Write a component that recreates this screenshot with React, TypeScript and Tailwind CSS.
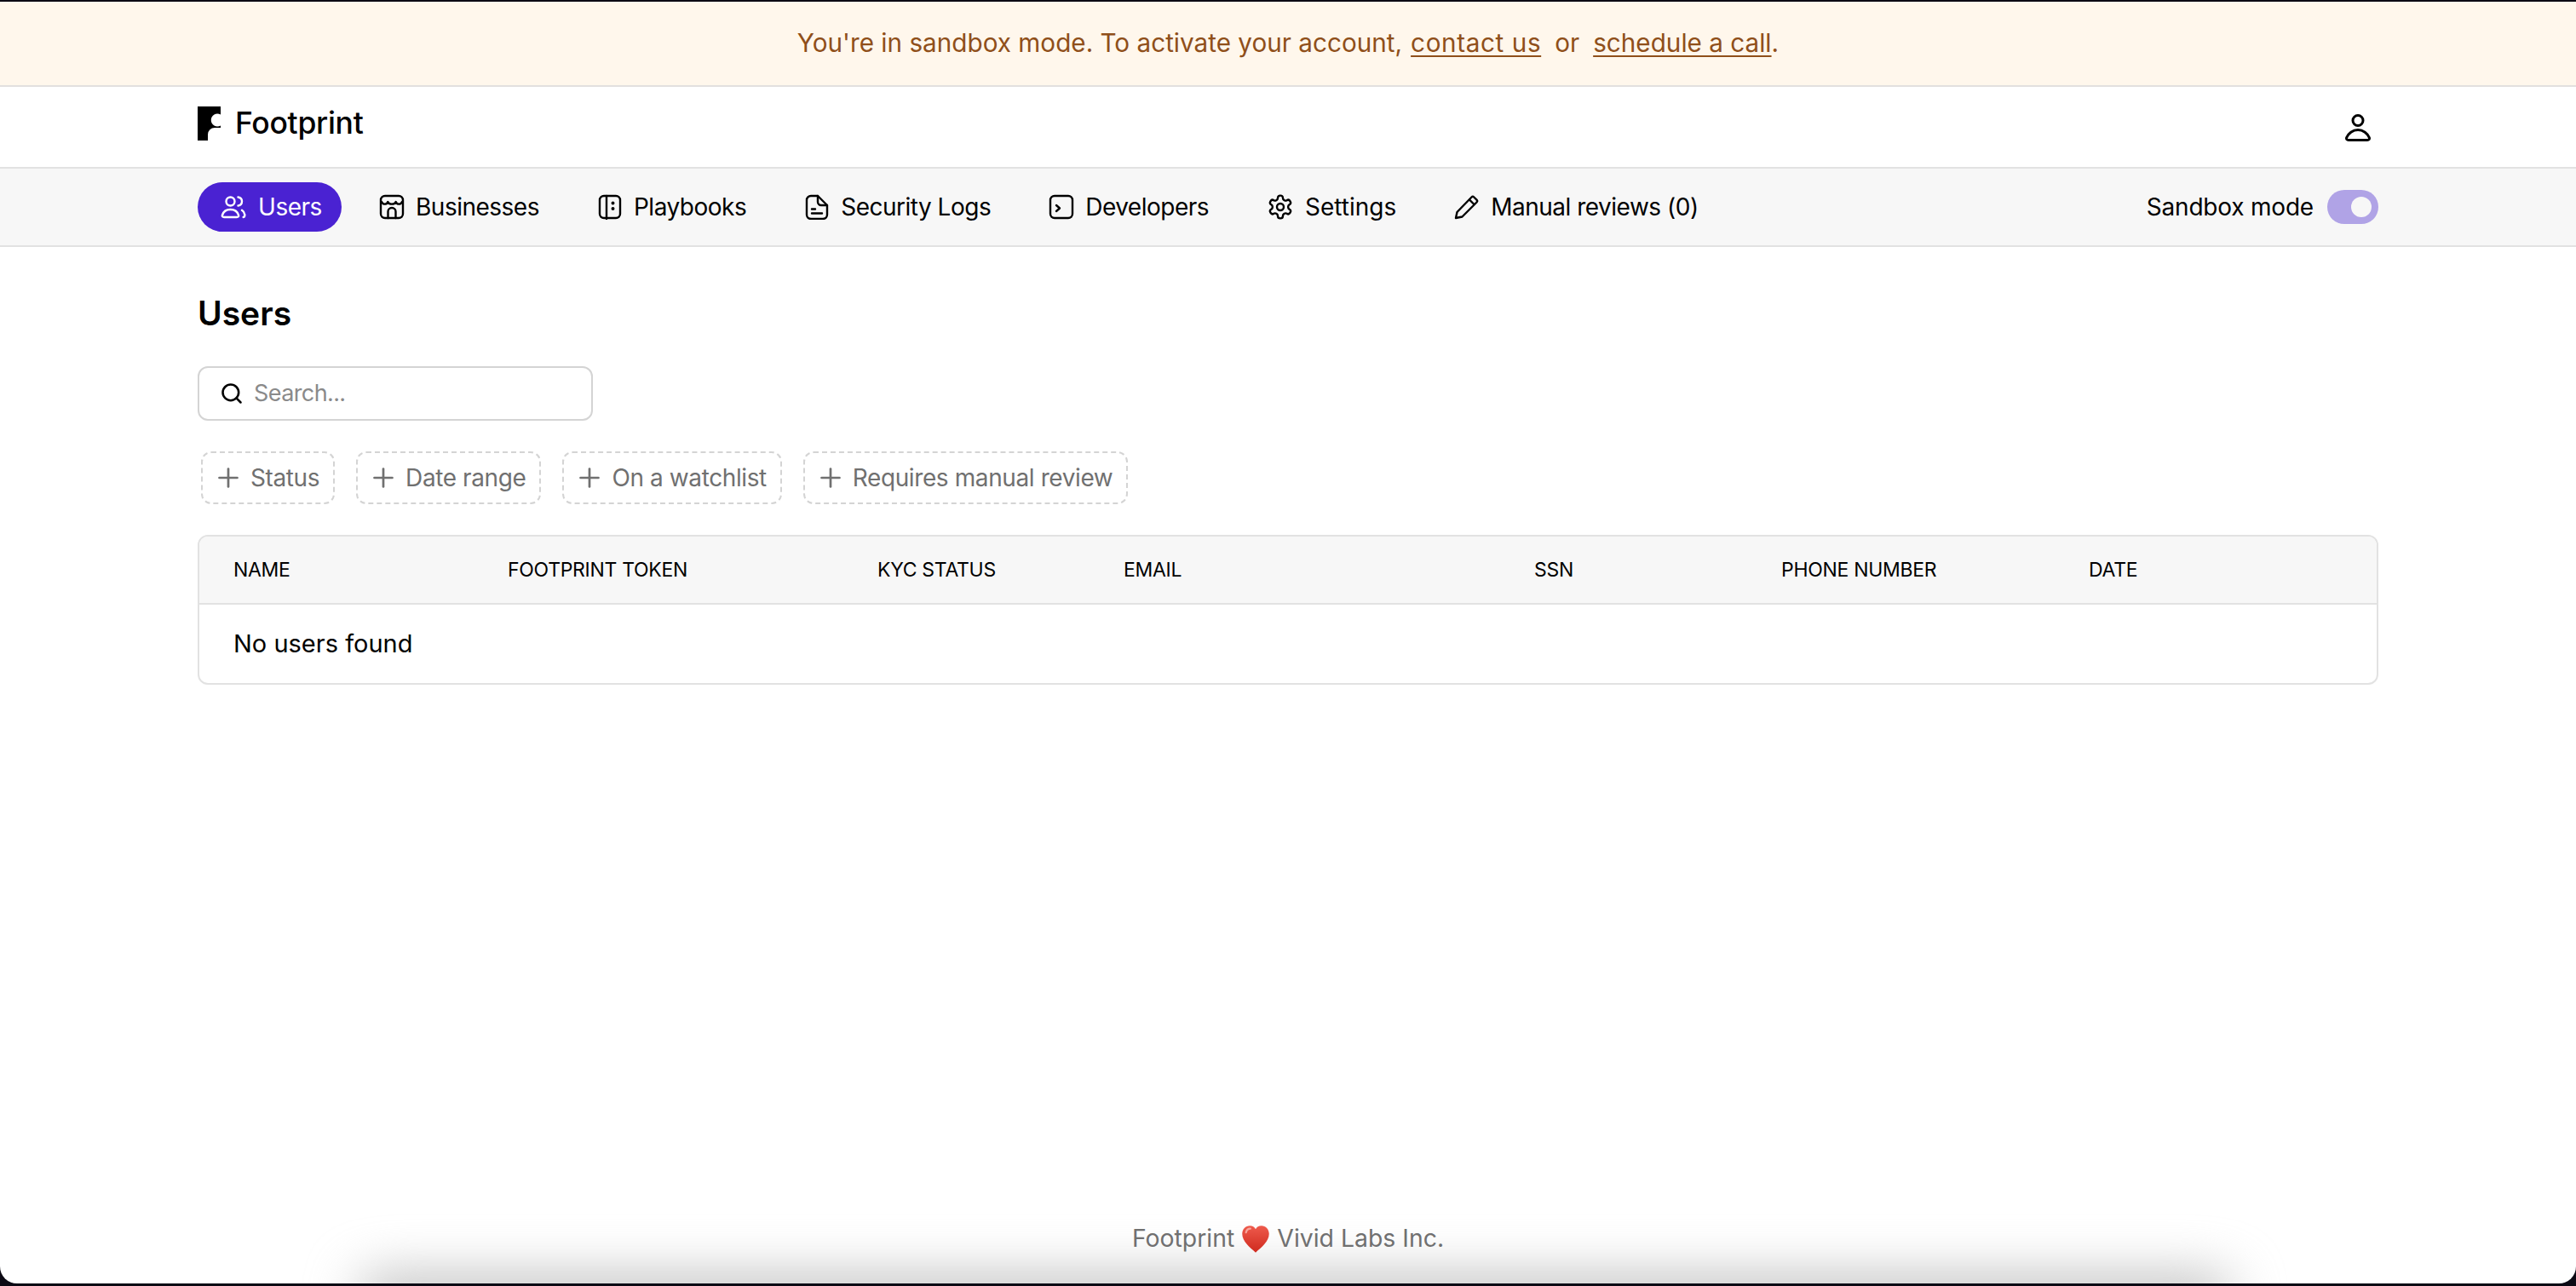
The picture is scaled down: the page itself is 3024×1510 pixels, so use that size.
import React from 'react';
import { Search, Plus } from 'lucide-react';

const font = "font-['Inter','Liberation_Sans',sans-serif]";

function UsersIcon() {
  return (
    <svg width="30" height="30" viewBox="0 0 30 30" fill="none" stroke="currentColor" strokeWidth="2.4" strokeLinecap="round" strokeLinejoin="round">
      <circle cx="11.5" cy="8.5" r="5" />
      <path d="M4 27c-1.700 0-2.500-1-2-2.500C3.300 20.300 7 18 11.500 18s8.200 2.300 9.500 6.500c.5 1.500-.3 2.500-2 2.500H4Z" />
      <path d="M20.500 3.500c2.800.4 4.500 2.500 4.500 5s-1.700 4.600-4.500 5" />
      <path d="M25 18.800c1.700 1.100 2.900 2.900 3.300 5.200.2 1.500-.4 2.800-1.600 3" />
    </svg>
  );
}

function StoreIcon() {
  return (
    <svg width="30" height="30" viewBox="0 0 30 30" fill="none" stroke="currentColor" strokeWidth="2.4" strokeLinecap="round" strokeLinejoin="round">
      <rect x="2" y="2" width="26" height="26" rx="5" />
      <path d="M3 9c1.500 3.500 6 3.500 7.300 0 1.300 3.500 8.100 3.500 9.400 0 1.300 3.500 5.800 3.500 7.300 0" />
      <path d="M10.500 28v-7.500a4.500 4.500 0 0 1 9 0V28" />
    </svg>
  );
}

function BookIcon() {
  return (
    <svg width="30" height="30" viewBox="0 0 30 30" fill="none" stroke="currentColor" strokeWidth="2.4" strokeLinecap="round" strokeLinejoin="round">
      <rect x="3" y="2" width="24" height="26" rx="5" />
      <path d="M11 2v27" />
      <circle cx="18.500" cy="10.500" r="0.800" fill="currentColor" />
      <circle cx="18.500" cy="17" r="0.800" fill="currentColor" />
    </svg>
  );
}

function FileIcon() {
  return (
    <svg width="30" height="30" viewBox="0 0 30 30" fill="none" stroke="currentColor" strokeWidth="2.400" strokeLinecap="round" strokeLinejoin="round">
      <path d="M8 2h8l11 11v11a5 5 0 0 1-5 5H8a5 5 0 0 1-5-5V7a5 5 0 0 1 5-5Z" />
      <path d="M16 2v7a4 4 0 0 0 4 4h7" />
      <path d="M9 17.500h4M9 22.500h12" />
    </svg>
  );
}

function TerminalIcon() {
  return (
    <svg width="30" height="30" viewBox="0 0 30 30" fill="none" stroke="currentColor" strokeWidth="2.400" strokeLinecap="round" strokeLinejoin="round">
      <rect x="2" y="2" width="26" height="26" rx="5" />
      <path d="M9 13l4 3.500-4 3.500" />
    </svg>
  );
}

function GearIcon() {
  return (
    <svg width="32" height="32" viewBox="0 0 24 24" fill="none" stroke="currentColor" strokeWidth="1.800" strokeLinecap="round" strokeLinejoin="round">
      <path d="M12.220 2h-.44a2 2 0 0 0-2 2v.18a2 2 0 0 1-1 1.730l-.43.250a2 2 0 0 1-2 0l-.15-.080a2 2 0 0 0-2.730.730l-.220.380a2 2 0 0 0 .730 2.730l.150.100a2 2 0 0 1 1 1.720v.510a2 2 0 0 1-1 1.740l-.150.090a2 2 0 0 0-.730 2.730l.220.380a2 2 0 0 0 2.730.730l.150-.080a2 2 0 0 1 2 0l.430.250a2 2 0 0 1 1 1.730V20a2 2 0 0 0 2 2h.440a2 2 0 0 0 2-2v-.180a2 2 0 0 1 1-1.730l.430-.250a2 2 0 0 1 2 0l.150.080a2 2 0 0 0 2.730-.730l.220-.390a2 2 0 0 0-.730-2.730l-.150-.080a2 2 0 0 1-1-1.740v-.500a2 2 0 0 1 1-1.740l.150-.090a2 2 0 0 0 .730-2.730l-.220-.380a2 2 0 0 0-2.730-.730l-.150.080a2 2 0 0 1-2 0l-.430-.250a2 2 0 0 1-1-1.730V4a2 2 0 0 0-2-2z" />
      <circle cx="12" cy="12" r="3" />
    </svg>
  );
}

function PencilIcon() {
  return (
    <svg width="30" height="30" viewBox="0 0 30 30" fill="none" stroke="currentColor" strokeWidth="2.400" strokeLinecap="round" strokeLinejoin="round">
      <path d="M2 28l1.500-7L20.500 3.500a2 2 0 0 1 2.800 0l3.200 3.200a2 2 0 0 1 0 2.800L9.500 26.500 2 28Z" />
      <path d="M18 6.500l5.500 5.500" />
    </svg>
  );
}

function PersonIcon() {
  return (
    <svg width="30" height="32" viewBox="0 0 30 32" fill="none" stroke="currentColor" strokeWidth="3" strokeLinecap="round" strokeLinejoin="round">
      <circle cx="15" cy="7.500" r="6" />
      <path d="M4 30.500c-2 0-2.900-1.200-2.300-2.900C3.500 22.600 9 18.500 15 18.500s11.500 4.100 13.300 9.100c.6 1.700-.3 2.900-2.300 2.900H4Z" />
    </svg>
  );
}

function Logo() {
  return (
    <svg width="27" height="40" viewBox="0 0 27 40" fill="#000">
      <path d="M0 0H27V9.500A7.500 7.500 0 1 0 27 22.500V25H20A8 8 0 0 0 12 33V40H0Z" />
    </svg>
  );
}

function Heart() {
  return (
    <svg width="36" height="36" viewBox="0 0 32 32" className="mx-[7px]">
      <defs>
        <linearGradient id="heartFill" x1="0" y1="0" x2="0" y2="1">
          <stop offset="0" stopColor="#ee5a4c" />
          <stop offset="1" stopColor="#cf2a1e" />
        </linearGradient>
      </defs>
      <path d="M16 30C10 24.500 2 18.500 2 10.500 2 5.500 5.500 2 10 2c2.700 0 4.800 1.400 6 3.500C17.200 3.400 19.300 2 22 2c4.500 0 8 3.500 8 8.500C30 18.500 22 24.500 16 30Z" fill="url(#heartFill)" />
      <path d="M6 9c.5-2.500 2.500-4 4.500-4" stroke="#f8a79d" strokeWidth="2" fill="none" strokeLinecap="round" />
    </svg>
  );
}

const navItems = [
  { label: 'Businesses', icon: <StoreIcon />, labelClass: '' },
  { label: 'Playbooks', icon: <BookIcon />, labelClass: '' },
  { label: 'Security Logs', icon: <FileIcon />, labelClass: '' },
  { label: 'Developers', icon: <TerminalIcon />, labelClass: '' },
  { label: 'Settings', icon: <GearIcon />, labelClass: 'tracking-normal' },
  { label: 'Manual reviews (0)', icon: <PencilIcon />, labelClass: '' },
];

const filters = ['Status', 'Date range', 'On a watchlist', 'Requires manual review'];

const columns = [
  { label: 'NAME', width: 'w-[322px]' },
  { label: 'FOOTPRINT TOKEN', width: 'w-[434px]' },
  { label: 'KYC STATUS', width: 'w-[289px]' },
  { label: 'EMAIL', width: 'w-[482px]' },
  { label: 'SSN', width: 'w-[290px]' },
  { label: 'PHONE NUMBER', width: 'w-[361px]' },
  { label: 'DATE', width: 'w-[280px]' },
];

export default function App() {
  return (
    <div className={`${font} relative h-[1510px] w-[3024px] overflow-hidden bg-[#0c0a14] pt-[2px] pb-[3px] text-black`}>
      <div className="relative flex h-full flex-col overflow-hidden rounded-b-[20px] bg-white">
        {/* sandbox banner */}
        <div className="flex h-[100px] items-center justify-center border-b-2 border-[#e2e0de] bg-[#fff7ec] pb-[2px] text-[29.7px] text-[#8f4f1a]">
          <span>You're in sandbox mode. To activate your account,</span>
          <span className="ml-[10px] tracking-[0.6px] underline underline-offset-4">contact us</span>
          <span className="mx-[16px]">or</span>
          <span className="underline underline-offset-4">schedule a call</span>
          <span>.</span>
        </div>

        {/* header */}
        <div className="flex h-[94px] items-center justify-between px-[232px]">
          <div className="flex items-center gap-[17px] pb-[8px]">
            <Logo />
            <span className="text-[35.5px] font-medium tracking-[-0.3px]">Footprint</span>
          </div>
          <div className="mr-[9px] mt-[2px]">
            <PersonIcon />
          </div>
        </div>

        {/* nav */}
        <div className="flex h-[94px] items-center justify-between border-y-2 border-[#e2e2e2] bg-[#f7f7f7] px-[232px] text-[28px] tracking-[-0.5px]">
          <div className="flex items-center gap-[44px]">
            <div className="flex h-[58px] w-[169px] items-center justify-center gap-[14px] rounded-full bg-[#4a22d2] pl-[4px] text-white">
              <UsersIcon />
              <span>Users</span>
            </div>
            <div className="flex items-center gap-[68px]">
              {navItems.map((item) => (
                <div key={item.label} className="flex items-center gap-[13px]">
                  {item.icon}
                  <span className={item.labelClass}>{item.label}</span>
                </div>
              ))}
            </div>
          </div>
          <div className="flex items-center gap-[16px]">
            <span className="tracking-[-0.2px]">Sandbox mode</span>
            <div className="flex h-[40px] w-[60px] items-center justify-end rounded-full bg-[#b0a3e6] pr-[8px]">
              <div className="h-[24px] w-[24px] rounded-full bg-[#f7f7f7]" />
            </div>
          </div>
        </div>

        {/* page content */}
        <div className="flex flex-col px-[232px]">
          <h1 className="mt-[54px] text-[39px] leading-[48px] font-semibold">Users</h1>

          <div className="mt-[38px] flex h-[64px] w-[464px] items-center gap-[12px] rounded-[12px] border-2 border-[#d4d4d4] px-[24px] text-[27px] tracking-[-0.6px] text-[#8a8a8a]">
            <Search size={28} className="text-black" strokeWidth={2.200} />
            <span>Search...</span>
          </div>

          <div className="mt-[36px] flex gap-[25px] pl-[4px]">
            {filters.map((label) => (
              <div key={label} className="flex h-[62px] items-center gap-[8px] rounded-[12px] border-2 border-dashed border-[#d4d4d4] pr-[16px] pl-[12px] text-[28px] tracking-[-0.4px] text-[#707070]">
                <Plus size={36} strokeWidth={1.800} />
                <span>{label}</span>
              </div>
            ))}
          </div>

          <div className="mt-[36px] overflow-hidden rounded-[12px] border-2 border-[#e2e2e2]">
            <div className="flex h-[80px] items-center border-b-2 border-[#e2e2e2] bg-[#f7f7f7] pl-[40px] text-[23px] tracking-[-0.3px]">
              {columns.map((c) => (
                <div key={c.label} className={c.width}>{c.label}</div>
              ))}
            </div>
            <div className="flex h-[92px] items-center pl-[40px] text-[29px]">No users found</div>
          </div>
        </div>

        {/* footer */}
        <div className="absolute bottom-[31px] left-0 z-10 flex w-full items-center justify-center text-[28.4px] text-[#707070]">
          <span>Footprint</span>
          <Heart />
          <span>Vivid Labs Inc.</span>
        </div>
        {/* blurred shadow rising from the bottom edge */}
        <div className="absolute bottom-[-40px] left-[420px] h-[50px] w-[2200px] rounded-full bg-[#bdbdbd] blur-[30px]" />
      </div>
    </div>
  );
}
